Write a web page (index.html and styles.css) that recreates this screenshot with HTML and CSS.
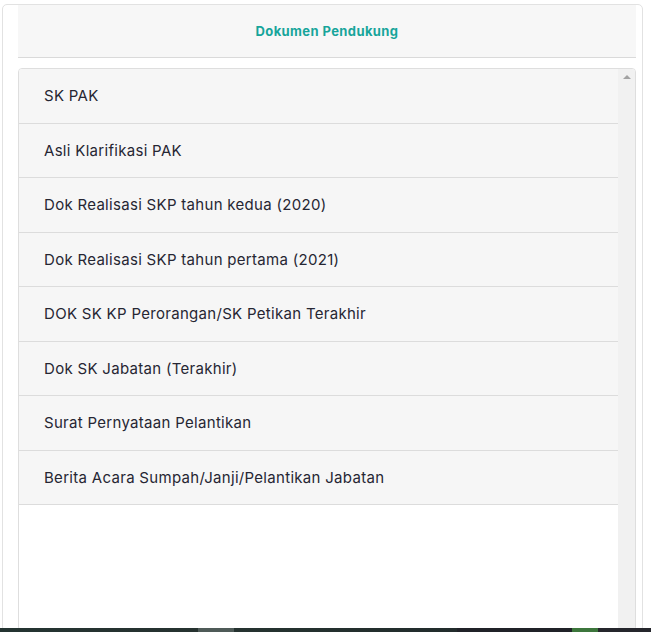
FILE: index.html
```html
<!DOCTYPE html>
<html lang="id">
<head>
<meta charset="utf-8">
<title>Dokumen Pendukung</title>
<link rel="stylesheet" href="styles.css">
</head>
<body>
<div class="card">
  <div class="card-header">Dokumen Pendukung</div>
  <div class="list-box">
    <ul class="doc-list">
      <li class="doc-item">SK PAK</li>
      <li class="doc-item">Asli Klarifikasi PAK</li>
      <li class="doc-item">Dok Realisasi SKP tahun kedua (2020)</li>
      <li class="doc-item">Dok Realisasi SKP tahun pertama (2021)</li>
      <li class="doc-item">DOK SK KP Perorangan/SK Petikan Terakhir</li>
      <li class="doc-item">Dok SK Jabatan (Terakhir)</li>
      <li class="doc-item">Surat Pernyataan Pelantikan</li>
      <li class="doc-item">Berita Acara Sumpah/Janji/Pelantikan Jabatan</li>
    </ul>
    <div class="scrollbar"><span class="scroll-up"></span></div>
  </div>
</div>
<div class="taskbar">
  <span class="seg seg-a"></span>
  <span class="seg seg-b"></span>
  <span class="seg seg-c"></span>
  <span class="seg seg-d"></span>
  <span class="seg seg-e"></span>
  <span class="seg seg-f"></span>
</div>
</body>
</html>
```
FILE: styles.css
```css
html, body {
  margin: 0;
  padding: 0;
  height: 100%;
  overflow: hidden;
  background: #ffffff;
}
body {
  font-family: "Inter", "Noto Sans", sans-serif;
  color: #262633;
}
.card {
  box-sizing: border-box;
  margin: 4px 0 0 2px;
  width: 641px;
  height: calc(100vh - 4px);
  border: 1px solid #e2e2e2;
  border-radius: 5px;
  padding: 0 6px 0 15px;
  display: flex;
  flex-direction: column;
  gap: 10px;
}
.card-header {
  flex: none;
  height: 52px;
  background: #f7f7f7;
  border-bottom: 1px solid #dadada;
  display: flex;
  align-items: center;
  justify-content: center;
  font-size: 13px;
  font-weight: 700;
  letter-spacing: 0.4px;
  color: #17a59b;
}
.list-box {
  flex: 1;
  min-height: 0;
  border: 1px solid #dedede;
  border-radius: 4px;
  display: flex;
  overflow: hidden;
}
.doc-list {
  list-style: none;
  margin: 0;
  padding: 0;
  flex: 1;
}
.doc-item {
  box-sizing: border-box;
  height: 54.5px;
  border-bottom: 1px solid #dcdcdc;
  background: #f6f6f6;
  padding: 0 0 0 25px;
  display: flex;
  align-items: center;
  font-size: 15px;
  letter-spacing: 0.3px;
}
.scrollbar {
  width: 17px;
  background: #f1f1f1;
  position: relative;
}
.scroll-up {
  position: absolute;
  top: 6px;
  left: 5px;
  width: 0;
  height: 0;
  border-left: 4px solid transparent;
  border-right: 4px solid transparent;
  border-bottom: 4px solid #a3a3a3;
}
.taskbar {
  position: fixed;
  left: 0;
  right: 0;
  bottom: 0;
  height: 4px;
  display: flex;
}
.seg { display: block; height: 100%; }
.seg-a { width: 198px; background: linear-gradient(90deg, #243431, #263230); }
.seg-b { width: 36px; background: #4f5b58; }
.seg-c { width: 223px; background: linear-gradient(90deg, #253330, #222c2c); }
.seg-d { width: 115px; background: #202228; }
.seg-e { width: 26px; background: #3c763c; }
.seg-f { flex: 1; background: #25262c; }
```
